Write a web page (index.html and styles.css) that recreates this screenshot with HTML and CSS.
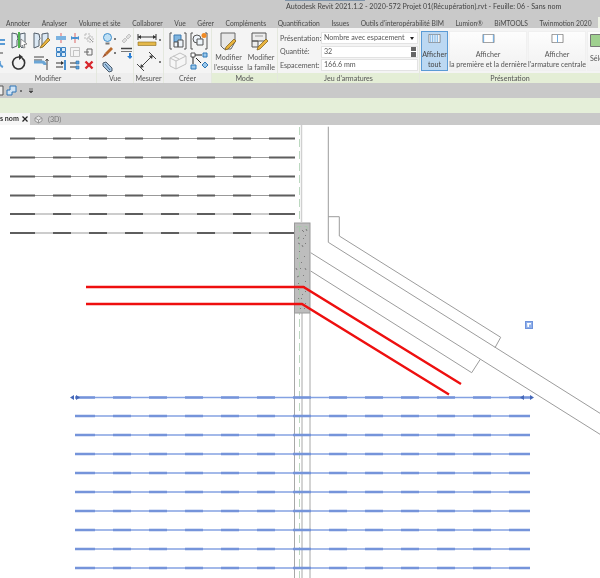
FILE: index.html
```html
<!DOCTYPE html>
<html lang="fr">
<head>
<meta charset="utf-8">
<title>Autodesk Revit</title>
<link rel="stylesheet" href="styles.css">
</head>
<body>
<div class="app">
  <header class="titlebar"><span class="title">Autodesk Revit 2021.1.2 - 2020-572 Projet 01(Récupération).rvt - Feuille: 06 - Sans nom</span></header>
  <nav class="tabs">
    <span>Annoter</span><span>Analyser</span><span>Volume et site</span><span>Collaborer</span><span>Vue</span><span>Gérer</span><span>Compléments</span><span>Quantification</span><span>Issues</span><span>Outils d'interopérabilité BIM</span><span>Lumion®</span><span>BiMTOOLS</span><span>Twinmotion 2020</span>
  </nav>
  <section class="ribbon">
    <div class="panel p-modifier">
      <div class="body modifier-grid">
        <svg class="ic-edge" viewBox="0 0 6 36"><path d="M0 6h5M0 10h5" stroke="#5a9bd5" stroke-width="2"/><path d="M0 27a5 5 0 0 0 3 6" fill="none" stroke="#5a9bd5" stroke-width="2"/><path d="M0 19h3" stroke="#444"/></svg>
        <div class="col-large">
          <svg class="ic-lg" viewBox="0 0 18 17"><path d="M1 1l5 1 1 5-1 1v6l-5 2zM9 2l5-1v11l-3 4-2-2z" fill="#eaf1f8" stroke="#55606b"/><path d="M8 0v16" stroke="#4fb24f" stroke-width="2"/><path d="M10 7l6 5-3 .5 1 3-1.500.5-1-3-2 2z" fill="#fff" stroke="#666" stroke-width=".7"/></svg>
          <svg class="ic-lg" viewBox="0 0 18 17"><path d="M8 3a6 6 0 1 0 3 1" fill="none" stroke="#333" stroke-width="1.600"/><path d="M8 0l4 3-4 3z" fill="#333"/></svg>
        </div>
        <div class="col-large">
          <svg class="ic-lg" viewBox="0 0 18 17"><path d="M1 1l5 1 1 5-1 1v6l-5 2zM9 2l6-1v7l-4 6-2 1z" fill="#dce9f5" stroke="#55606b"/><path d="M8 14l7-8 2 2-7 7-3 1z" fill="#e8b33e" stroke="#7a5a12" stroke-width=".7"/></svg>
          <svg class="ic-lg" viewBox="0 0 18 17"><path d="M1 3h10M1 6h8" stroke="#444"/><path d="M1 8h8a3 3 0 0 1 3 3v0" fill="none" stroke="#6ba6d6" stroke-width="3"/><path d="M14 16V5m-1.500 2L14 5l1.500 2" fill="none" stroke="#444"/></svg>
        </div>
        <div class="small-grid">
          <svg viewBox="0 0 10 10"><path d="M5 0v10" stroke="#d66" /><path d="M0 3h10v4H0z" fill="#7cb3e0"/></svg>
          <svg viewBox="0 0 10 10"><path d="M5 0v10" stroke="#d66"/><path d="M1 3l3 2-3 2zM9 3L6 5l3 2z" fill="#4a90d0"/><path d="M3 5h4" stroke="#4a90d0" stroke-width="2"/></svg>
          <svg viewBox="0 0 10 10"><path d="M1 1h5v5H1zM4 4h5v5H4z" fill="none" stroke="#bbb" stroke-dasharray="2 1"/><path d="M6 6l3 3" stroke="#999"/></svg>
          <svg viewBox="0 0 10 10"><path d="M.5.500h4v4h-4zM5.500.500h4v4h-4zM.5 5.500h4v4h-4zM5.500 5.500h4v4h-4z" fill="#dcebf7" stroke="#3b82c4"/></svg>
          <svg viewBox="0 0 10 10"><path d="M.5.500h9v9h-9zM3.500 3.500h6" fill="none" stroke="#c4c4c4"/><path d="M3.500 3.500v6" stroke="#c4c4c4"/></svg>
          <svg viewBox="0 0 10 10"><path d="M3 2h5v6H3zM0 5h5" fill="none" stroke="#666"/></svg>
          <svg viewBox="0 0 10 10"><path d="M0 3h7M0 7h7" stroke="#333"/><path d="M5 1l3 2-3 2z" fill="#333"/><path d="M9 0v10" stroke="#4a90d0" stroke-width="2"/></svg>
          <svg viewBox="0 0 10 10"><path d="M0 3h6M0 7h6" stroke="#333"/><path d="M6 1h3v3H6zM6 6h3v3H6z" fill="#5aa0dc" stroke="#2d6ea8" stroke-width=".6"/></svg>
          <svg viewBox="0 0 10 10"><path d="M1.500 1.500l7 7m0-7l-7 7" stroke="#d8262c" stroke-width="2.400"/></svg>
        </div>
      </div>
      <div class="label">Modifier</div>
    </div>
    <div class="panel p-vue">
      <div class="body vue-grid">
        <svg class="ic-sm" viewBox="0 0 11 12"><circle cx="5.500" cy="4.500" r="4" fill="#bfe0f5" stroke="#3f8ecb"/><path d="M3.500 9.500h4v2h-4z" fill="#777"/></svg>
        <i class="dot"></i>
        <svg class="ic-sm" viewBox="0 0 11 12"><path d="M1 8l3-3 2 2-3 3zM5 4l3-3 2 2-3 3z" fill="#dedede" stroke="#c4c4c4"/></svg>
        <svg class="ic-sm" viewBox="0 0 11 12"><path d="M0 11l3-5 2 2z" fill="#a0522d"/><path d="M3 6l6-6 2 2-6 6z" fill="#b96a2d"/></svg>
        <i class="dot"></i>
        <svg class="ic-sm" viewBox="0 0 11 12"><path d="M0 1.500h11" stroke="#444" stroke-width="1.500"/><path d="M0 4.500h11" stroke="#777"/><path d="M8 6v3H6l3 3 3-3h-2V6z" fill="#2a7fd4"/></svg>
        <svg class="ic-sm" viewBox="0 0 11 12"><path d="M1 2l3-1 6 6v3l-3 1-6-6z" fill="#a9c7e3" stroke="#4a5a6a"/><path d="M3 3l5 6" stroke="#39668f"/></svg>
      </div>
      <div class="label">Vue</div>
    </div>
    <div class="panel p-mesurer">
      <div class="body mesurer-col">
        <div class="row">
          <svg class="ic-dim" viewBox="0 0 20 14"><path d="M1 4h18M1 1v6M19 1v6" fill="none" stroke="#333"/><path d="M1 4l3-2v4zM19 4l-3-2v4z" fill="#333"/><path d="M1 9h18v3.500H1z" fill="#e4b84a" stroke="#8a6a1a" stroke-width=".6"/></svg>
          <i class="dot"></i>
        </div>
        <div class="row">
          <svg class="ic-dim2" viewBox="0 0 20 19"><path d="M3 16L16 3M0 12l7 7M12 0l7 7" fill="none" stroke="#444"/><path d="M3 16l1-4 3 3zM16 3l-1 4-3-3z" fill="#444"/></svg>
          <i class="dot"></i>
        </div>
      </div>
      <div class="label">Mesurer</div>
    </div>
    <div class="panel p-creer">
      <div class="body creer-grid">
        <svg viewBox="0 0 18 18"><path d="M3 1H1v16h2M15 1h2v16h-2" fill="none" stroke="#555"/><path d="M5 3h7v7H5z" fill="#7fb5e0" stroke="#3f7bb0"/><path d="M5 10h4v5H5zM9 8h5v7H9z" fill="#eef4fa" stroke="#555"/></svg>
        <svg viewBox="0 0 18 18"><path d="M3 1H1v16h2M15 1h2v16h-2" fill="none" stroke="#555"/><circle cx="7" cy="7" r="4" fill="#eef4fa" stroke="#555"/><path d="M7 7h6v6H7z" fill="#eef4fa" stroke="#555"/><circle cx="14" cy="3.500" r="2.500" fill="#f08a24"/></svg>
        <svg viewBox="0 0 18 18"><path d="M1 6l10-5 6 3v8l-10 5-6-3z" fill="#f6f6f6" stroke="#c0c0c0"/><path d="M1 6l6 3v8M7 9l10-5M4 4l6 3" fill="none" stroke="#c0c0c0"/></svg>
        <svg viewBox="0 0 18 18"><path d="M1 1h4v4H1z" fill="#fff" stroke="#555"/><path d="M13 1h4v4h-4z" fill="#9cc8ea" stroke="#2d78b8"/><path d="M1 13h5v4H1z" fill="#9cc8ea" stroke="#2d78b8"/><path d="M15 10l3 3-3 3-3-3z" fill="#9cc8ea" stroke="#2d78b8"/><path d="M5 3h7M3 5v7M6 6l5 5" stroke="#222"/></svg>
      </div>
      <div class="label">Créer</div>
    </div>
    <div class="panel p-mode green">
      <div class="body mode-row">
        <div class="tool">
          <svg viewBox="0 0 18 19"><path d="M1 1h14v9l-4 7H4l-3-3z" fill="#e7e7e7" stroke="#666"/><path d="M6 15l8-8 2 2-8 8-3 1z" fill="#e8b33e" stroke="#7a5a12" stroke-width=".7"/></svg>
          <span>Modifier<br>l'esquisse</span>
        </div>
        <div class="tool">
          <svg viewBox="0 0 20 19"><path d="M1 1h14v8H1zM1 9h6v6H1z" fill="#ededed" stroke="#555"/><path d="M4 4h8" stroke="#999"/><path d="M7 15l8-8 2 2-8 8-3 1z" fill="#e8b33e" stroke="#7a5a12" stroke-width=".7"/></svg>
          <span>Modifier<br>la famille</span>
        </div>
      </div>
      <div class="label">Mode</div>
    </div>
    <div class="panel p-jeu green">
      <div class="body jeu-form">
        <div class="field"><label>Présentation:</label><div class="input select">Nombre avec espacement<i class="caret"></i></div></div>
        <div class="field"><label>Quantité:</label><div class="input">32<span class="spin"><i></i><i></i></span></div></div>
        <div class="field"><label>Espacement:</label><div class="input">166.6 mm</div></div>
      </div>
      <div class="label">Jeu d'armatures</div>
    </div>
    <div class="panel p-pres green">
      <div class="body pres-row">
        <div class="btn b-tout selected">
          <svg viewBox="0 0 17 13"><path d="M.5.500h16v12H.500z" fill="#fff" stroke="#666"/><path d="M3 1v11M5.500 1v11M8 1v11M10.500 1v11M13 1v11" stroke="#6aa9e0" stroke-width="1.200"/></svg>
          <span>Afficher<br>tout</span>
        </div>
        <div class="btn b-prem">
          <svg viewBox="0 0 17 13"><path d="M.5.500h16v12H.500z" fill="#fff" stroke="#666"/><path d="M1.500 1v11M15.500 1v11" stroke="#6aa9e0" stroke-width="1.400"/></svg>
          <span>Afficher<br>la première et la dernière</span>
        </div>
        <div class="btn b-cent">
          <svg viewBox="0 0 17 13"><path d="M.5.500h16v12H.500z" fill="#fff" stroke="#666"/><path d="M8.500 1v11" stroke="#6aa9e0" stroke-width="1.400"/></svg>
          <span>Afficher<br>l'armature centrale</span>
        </div>
        <div class="btn b-sel">
          <svg viewBox="0 0 17 13"><path d="M.5.500h16v12H.500z" fill="#9fd08f" stroke="#777"/></svg>
          <span>Séle</span>
        </div>
      </div>
      <div class="label">Présentation</div>
    </div>
  </section>
  <div class="quickbar">
    <svg class="q1" viewBox="0 0 4 11"><path d="M0 1h3v9H0" fill="#eee" stroke="#555"/></svg>
    <svg class="q2" viewBox="0 0 11 11"><path d="M1 5h3V1h6v6H6v3H1z" fill="#cfe3f5" stroke="#2f74b5"/></svg>
    <i class="dot"></i>
    <svg class="q3" viewBox="0 0 6 6"><path d="M1 1h4M1 3h4l-2 2z" fill="#444" stroke="#444" stroke-width=".7"/></svg>
  </div>
  <div class="optionsbar"></div>
  <div class="viewtabs">
    <div class="vt-active"><b>s nom</b><svg class="x" viewBox="0 0 6 6"><path d="M.5.500l5 5m0-5l-5 5" stroke="#222" stroke-width="1.200"/></svg></div>
    <svg class="cube" viewBox="0 0 9 9"><path d="M1 3l3.500-2L8 3v3L4.500 8 1 6z" fill="#e8e8e8" stroke="#999"/><path d="M1 3l3.500 2L8 3M4.500 5v3" fill="none" stroke="#999"/></svg>
    <span class="vt">(3D)</span>
  </div>
  <main class="canvas">
    <svg class="drawing" viewBox="0 125 600 453" width="600" height="453">
      <defs>
        <g id="black-bar">
          <path class="bar-thin" d="M10 0H295"/>
          <path class="bar-thick" d="M10 0H35M53 0H71M89 0H107M125 0H143M161 0H179M197 0H215M233 0H251M269 0H295"/>
        </g>
        <g id="blue-bar">
          <path class="blue-thin" d="M75 0H530"/>
          <path class="blue-thick" d="M75 0H95M113 0H131M149 0H167M185 0H203M221 0H239M257 0H275M293 0H311M329 0H347M365 0H383M401 0H419M437 0H455M473 0H491M509 0H530"/>
        </g>
      </defs>
      <path class="wall-light" d="M301.500 125V222"/>
      <path class="green-dash" d="M299.500 127V578"/>
      <path class="wall" d="M294.500 313V578M302 313V578M310 313V578"/>
      <use href="#black-bar" y="138.500"/>
      <use href="#black-bar" y="157.500"/>
      <use href="#black-bar" y="176.500"/>
      <use href="#black-bar" y="195.500"/>
      <use href="#black-bar" y="214"/>
      <use href="#black-bar" y="233"/>
      <path class="line" d="M328.300 126.700V242.300L600 413.300"/>
      <path class="line" d="M328.300 216.700H339.300V236L500.700 337.300L495 347.700"/>
      <path class="line" d="M310.700 252.700L600 434.300"/>
      <path class="line" d="M310.700 271L471.700 372.700L480.300 359.300"/>
      <rect class="column" x="294.500" y="223" width="15.500" height="90"/>
      <path class="column-in" d="M297 228V226.500H307V230M299.500 226V310"/>
      <path class="speck" d="M302 230l2 2M306 229l1 2M305 235l1 1M298 243l2 1M302 245l1 2M299 237l-1 2M303 238l1 1M306 243l-1 1M299 251l1 1M304 256l1 1M297 258l1 1M302 262l-1 1M296 268l1 2M300 268l1 1M305 268l1 2M297 277l2-1M303 275l1 1M306 281l-1 1M298 283l1 1M298 290l1-1M304 286l1 1M306 291l-1 1M302 294l1 1M298 298l1 1M301 299l1-1M306 303l-1 1M300 308l1 1M304 309l1-1"/>
      <use href="#blue-bar" y="397.500"/>
      <use href="#blue-bar" y="416"/>
      <use href="#blue-bar" y="435"/>
      <use href="#blue-bar" y="454"/>
      <use href="#blue-bar" y="473"/>
      <use href="#blue-bar" y="492"/>
      <use href="#blue-bar" y="511"/>
      <use href="#blue-bar" y="530"/>
      <use href="#blue-bar" y="549"/>
      <use href="#blue-bar" y="568"/>
      <path class="arrow-a" d="M74 395v5l-4-2.500zM76 395v5l4-2.500zM524 395v5l-4-2.500zM530 395v5l4-2.500z"/>
      <path class="red" d="M86 287H303.500L461 384"/>
      <path class="red" d="M86 304H302L449 394.500"/>
      <rect class="check-box" x="525.500" y="321.500" width="7" height="7"/>
      <path class="check-mark" d="M527 323h4v1.500h-2v2.500h-1.500z"/>
    </svg>
  </main>
</div>
</body>
</html>
```

FILE: styles.css
```css
* { box-sizing: border-box; }
html, body { margin: 0; padding: 0; background: #fff; }
body { width: 600px; height: 578px; overflow: hidden; font-family: Lato, "Open Sans", "Liberation Sans", sans-serif; font-size: 7.1px; color: #555; }
.app { width: 600px; height: 578px; display: flex; flex-direction: column; overflow: hidden; filter: blur(.3px); }
.titlebar { height: 17px; background: linear-gradient(#7f93a8, #7f93a8) 285px 0 / 80px 1px no-repeat, #c9c9c9; padding: 1px 0 0 286px; line-height: 11px; font-size: 7.1px; white-space: nowrap; color: #444; }
.tabs { height: 11px; background: linear-gradient(#eef3e6, #eef3e6) 598px 0 / 2px 11px no-repeat, #c9c9c9; display: flex; gap: 11.600px; padding: 1px 0 0 6px; line-height: 11px; font-size: 6.7px; white-space: nowrap; color: #4a4a4a; }
.ribbon { height: 55px; display: flex; background: #f4f4f4; overflow: hidden; }
.panel { display: flex; flex-direction: column; flex: none; border-right: 1px solid #e4e8de; }
.body { height: 45px; padding-top: 3px; }
.label { height: 10px; line-height: 11px; text-align: center; background: #eeeeee; color: #555; white-space: nowrap; }
.green .label { background: #e4eed6; }
.p-modifier { width: 97px; }
.p-vue { width: 37px; }
.p-mesurer { width: 30px; }
.p-creer { width: 48px; }
.p-mode { width: 66px; }
.p-jeu { width: 142px; }
.p-pres { width: 180px; border-right: 0; }
.modifier-grid { display: flex; }
.ic-edge { width: 6px; height: 36px; margin-right: 5px; margin-top: 3px; }
.col-large { width: 18px; margin-right: 4px; display: flex; flex-direction: column; gap: 5px; padding-top: 1px; }
.ic-lg { width: 18px; height: 17px; }
.small-grid { display: grid; grid-template-columns: repeat(3, 10px); grid-auto-rows: 10px; column-gap: 4px; row-gap: 3.500px; margin: 2px 0 0 1px; }
.small-grid svg { width: 10px; height: 10px; }
.vue-grid { display: grid; grid-template-columns: 11px 6px 11px; grid-auto-rows: 11px; row-gap: 3px; column-gap: 1px; padding: 5px 0 0 5px; align-items: center; }
.ic-sm { width: 11px; height: 12px; }
.dot { display: block; width: 2px; height: 2px; background: #555; border-radius: 50%; }
.mesurer-col { display: flex; flex-direction: column; gap: 5px; padding: 5px 0 0 3px; }
.row { display: flex; align-items: center; gap: 2px; }
.ic-dim { width: 20px; height: 14px; }
.ic-dim2 { width: 20px; height: 19px; }
.creer-grid { display: grid; grid-template-columns: 18px 18px; grid-auto-rows: 18px; gap: 2px 3px; padding: 4px 0 0 5px; }
.creer-grid svg { width: 18px; height: 18px; }
.mode-row { display: flex; justify-content: space-around; padding-top: 4px; }
.tool { display: flex; flex-direction: column; align-items: center; gap: 2px; line-height: 10px; text-align: center; white-space: nowrap; }
.tool svg { width: 20px; height: 19px; }
.jeu-form { display: flex; flex-direction: column; gap: 1.500px; padding: 4px 1px 0 2px; }
.field { display: flex; align-items: center; height: 12px; }
.field label { width: 41px; flex: none; white-space: nowrap; }
.input { flex: 1; height: 12px; background: #fff; border: 1px solid #e3e3e3; line-height: 10px; padding-left: 2px; position: relative; }
.caret { position: absolute; right: 3px; top: 3.500px; border: 2px solid transparent; border-top: 3px solid #222; border-bottom: 0; }
.spin { position: absolute; right: 1px; top: 0; display: flex; flex-direction: column; gap: 1px; }
.spin i { display: block; width: 5px; height: 4.500px; background: #666; }
.pres-row { display: flex; gap: 1px; padding: 3px 0 0 1px; }
.btn { height: 40px; flex: none; display: flex; flex-direction: column; align-items: center; background: linear-gradient(#fdfdfd, #f1f1f1); line-height: 10px; text-align: center; white-space: nowrap; border: 1px solid #f0f0f0; }
.btn svg { width: 17px; height: 13px; margin: 2px 0 7px; }
.selected { background: #bcd8f2; border-color: #5b9bd5; color: #444; }
.b-tout { width: 27px; }
.b-prem { width: 78px; }
.b-cent { width: 58px; }
.b-sel { width: 14px; align-items: flex-start; padding-left: 2px; }
.quickbar { height: 15px; background: #c9c9c9; display: flex; align-items: center; }
.q1 { width: 4px; height: 11px; margin-right: 2px; }
.q2 { width: 11px; height: 11px; margin-right: 3px; }
.quickbar .dot { margin-right: 6px; }
.q3 { width: 6px; height: 6px; }
.optionsbar { height: 15px; background: #e5efd9; }
.viewtabs { height: 12px; background: #c9c9c9; display: flex; align-items: center; }
.vt-active { width: 30px; height: 12px; background: #f6f6f6; display: flex; align-items: center; color: #333; line-height: 12px; white-space: nowrap; }
.vt-active b { font-weight: 700; width: 22px; }
.x { width: 6px; height: 6px; }
.cube { width: 9px; height: 9px; margin: 0 5px 0 4px; }
.vt { color: #777; }
.canvas { flex: 1; background: #fff; }
.drawing { display: block; }
.drawing path, .drawing rect { fill: none; }
.bar-thin { stroke: #999; stroke-width: 1; }
.bar-thick { stroke: #5e5e5e; stroke-width: 2; }
.blue-thin { stroke: #84a2e2; stroke-width: 1.300; }
.blue-thick { stroke: #7594da; stroke-width: 2.500; }
.line { stroke: #9c9c9c; stroke-width: 1; }
.wall { stroke: #a8a8a8; stroke-width: 1; }
.wall-light { stroke: #d0d0d0; stroke-width: 1.500; }
.green-dash { stroke: #bcd8c0; stroke-width: 1; stroke-dasharray: 8 4; }
.drawing .column { fill: #bdbdbd; stroke: #9a9a9a; stroke-width: 1; }
.column-in { stroke: #a6c8a8; stroke-width: .8; stroke-dasharray: 6 3; }
.speck { stroke: #6a6a6a; stroke-width: .8; }
.red { stroke: #ee0f0f; stroke-width: 2.400; }
.drawing .arrow-a { fill: #4668b8; }
.drawing .check-box { fill: #8fb0ea; stroke: #6f93dc; stroke-width: 1; }
.drawing .check-mark { fill: #fff; }
```
